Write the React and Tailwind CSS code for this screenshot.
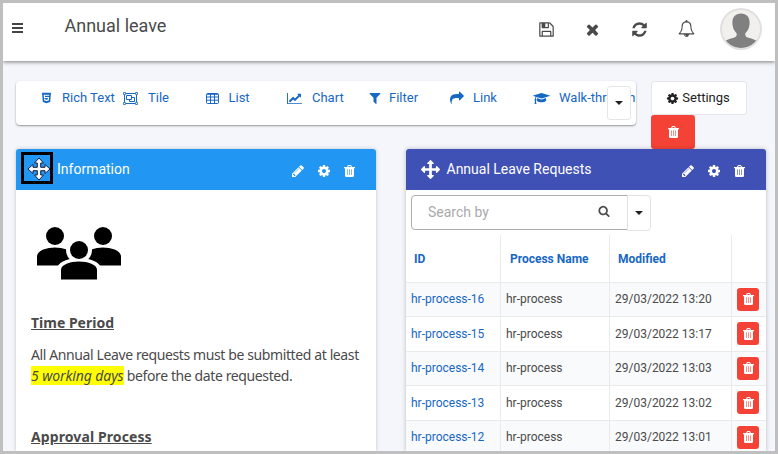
import React from "react";
import { FaHtml5 } from "react-icons/fa";

const PATHS = {
  refresh: "M1639 1056q0 5-1 7-64 268-268 434.5t-478 166.5q-146 0-282.5-55t-243.5-157l-129 129q-19 19-45 19t-45-19-19-45v-448q0-26 19-45t45-19h448q26 0 45 19t19 45-19 45l-137 137q71 66 161 102t187 36q134 0 250-65t186-179q11-17 53-117 8-23 30-23h192q13 0 22.5 9.5t9.5 22.5zm25-800v448q0 26-19 45t-45 19h-448q-26 0-45-19t-19-45 19-45l138-138q-148-137-349-137-134 0-250 65t-186 179q-11 17-53 117-8 23-30 23h-199q-13 0-22.5-9.5t-9.5-22.5v-7q65-268 270-434.5t480-166.5q146 0 284 55.5t245 156.5l130-129q19-19 45-19t45 19 19 45z",
  times: "M1490 1322q0 40-28 68l-136 136q-28 28-68 28t-68-28l-294-294-294 294q-28 28-68 28t-68-28l-136-136q-28-28-28-68t28-68l294-294-294-294q-28-28-28-68t28-68l136-136q28-28 68-28t68 28l294 294 294-294q28-28 68-28t68 28l136 136q28 28 28 68t-28 68l-294 294 294 294q28 28 28 68z",
  save: "M512 1536h768v-384h-768v384zm896 0h128v-896q0-14-10-38.5t-20-34.5l-281-281q-10-10-34-20t-39-10v416q0 40-28 68t-68 28h-576q-40 0-68-28t-28-68v-416h-128v1280h128v-416q0-40 28-68t68-28h832q40 0 68 28t28 68v416zm-384-928v-320q0-13-9.5-22.5t-22.5-9.5h-192q-13 0-22.5 9.5t-9.5 22.5v320q0 13 9.5 22.5t22.5 9.5h192q13 0 22.5-9.5t9.5-22.5zm640 32v928q0 40-28 68t-68 28h-1344q-40 0-68-28t-28-68v-1344q0-40 28-68t68-28h928q40 0 88 20t76 48l280 280q28 28 48 76t20 88z",
  bell: "M912 1696q0-16-16-16-59 0-101.5-42.5t-42.5-101.5q0-16-16-16t-16 16q0 73 51.5 124.5t124.5 51.5q16 0 16-16zm-666-288h1300q-266-300-266-832 0-51-24-105t-69-103-121.5-80.5-169.5-31.5-169.5 31.5-121.5 80.5-69 103-24 105q0 532-266 832zm1482 0q0 52-38 90t-90 38h-448q0 106-75 181t-181 75-181-75-75-181h-448q-52 0-90-38t-38-90q50-42 91-88t85-119.5 74.5-158.5 50-206 19.5-260q0-152 117-282.5t307-158.5q-8-19-8-39 0-40 28-68t68-28 68 28 28 68q0 20-8 39 190 28 307 158.5t117 282.5q0 139 19.5 260t50 206 74.5 158.5 85 119.5 91 88z",
  search: "M1216 832q0-185-131.5-316.5t-316.5-131.5-316.5 131.5-131.5 316.5 131.5 316.5 316.5 131.5 316.5-131.5 131.5-316.5zm512 832q0 52-38 90t-90 38q-54 0-90-38l-343-342q-179 124-399 124-143 0-273.5-55.5t-225-150-150-225-55.5-273.5 55.5-273.5 150-225 225-150 273.5-55.5 273.5 55.5 225 150 150 225 55.5 273.5q0 220-124 399l343 343q37 37 37 90z",
  arrows: "M1792 896q0 26-19 45l-256 256q-19 19-45 19t-45-19-19-45v-128h-384v384h128q26 0 45 19t19 45-19 45l-256 256q-19 19-45 19t-45-19l-256-256q-19-19-19-45t19-45 45-19h128v-384h-384v128q0 26-19 45t-45 19-45-19l-256-256q-19-19-19-45t19-45l256-256q19-19 45-19t45 19 19 45v128h384v-384h-128q-26 0-45-19t-19-45 19-45l256-256q19-19 45-19t45 19l256 256q19 19 19 45t-19 45-45 19h-128v384h384v-128q0-26 19-45t45-19 45 19l256 256q19 19 19 45z",
  cog: "M1152 896q0-106-75-181t-181-75-181 75-75 181 75 181 181 75 181-75 75-181zm512-109v222q0 12-8 23t-20 13l-185 28q-19 54-39 91 35 50 107 138 10 12 10 25t-9 23q-27 37-99 108t-94 71q-12 0-26-9l-138-108q-44 23-91 38-16 136-29 186-7 28-36 28h-222q-14 0-24.5-8.5t-11.5-21.5l-28-184q-49-16-90-37l-141 107q-10 9-25 9-14 0-25-11-126-114-165-168-7-10-7-23 0-12 8-23 15-21 51-66.5t54-70.5q-27-50-41-99l-183-27q-13-2-21-12.5t-8-23.5v-222q0-12 8-23t19-13l186-28q14-46 39-92-40-57-107-138-10-12-10-24 0-10 9-23 26-36 98.5-107.5t94.5-71.5q13 0 26 10l138 107q44-23 91-38 16-136 29-186 7-28 36-28h222q14 0 24.5 8.5t11.5 21.5l28 184q49 16 90 37l142-107q9-9 24-9 13 0 25 10 129 119 165 170 7 8 7 22 0 12-8 23-15 21-51 66.5t-54 70.5q26 50 41 98l183 28q13 2 21 12.5t8 23.5z",
  pencil: "M491 1536l91-91-235-235-91 91v107h128v128h107zm523-928q0-22-22-22-10 0-17 7l-542 542q-7 7-7 17 0 22 22 22 10 0 17-7l542-542q7-7 7-17zm-54-192l416 416-832 832h-416v-416zm683 96q0 53-37 90l-166 166-416-416 166-165q36-38 90-38 53 0 91 38l235 234q37 39 37 91z",
  chart: "M2048 1536v128h-2048v-1536h128v1408h1920zm-128-1248v435q0 21-19.5 29.5t-35.5-7.5l-121-121-633 633q-10 10-23 10t-23-10l-233-233-416 416-192-192 585-585q10-10 23-10t23 10l233 233 464-464-121-121q-16-16-7.5-35.5t29.5-19.5h435q14 0 23 9t9 23z",
  share: "M1792 640q0 26-19 45l-512 512q-19 19-45 19t-45-19-19-45v-256h-224q-98 0-175.5 6t-154 21.5-133 42.5-105.5 69.5-80 101-48.5 138.5-17.5 181q0 55 5 123 0 6 2.5 23.5t2.5 26.5q0 15-8.5 25t-23.5 10q-16 0-28-17-7-9-13-22t-13.5-30-10.5-24q-127-285-127-451 0-199 53-333 162-403 875-403h224v-256q0-26 19-45t45-19 45 19l512 512q19 19 19 45z",
  filter: "M1595 295q17 41-14 70l-493 493v742q0 42-39 59-13 5-25 5-27 0-45-19l-256-256q-19-19-19-45v-486l-493-493q-31-29-14-70 17-39 59-39h1280q42 0 59 39z",
  grad: "M1774 836l18 316q4 69-82 128t-235 93.5-323 34.5-323-34.5-235-93.5-82-128l18-316 574 181q22 7 48 7t48-7zm530-324q0 23-22 31l-1120 352q-4 1-10 1t-10-1l-652-206q-43 34-71 111.5t-34 178.5q63 36 63 109 0 69-58 107l58 433q2 14-8 25-9 11-24 11h-192q-15 0-24-11-10-11-8-25l58-433q-58-38-58-107 0-73 65-111 11-207 98-330l-333-104q-22-8-22-31t22-31l1120-352q4-1 10-1t10 1l1120 352q22 8 22 31z",
};

const VIEW = { chart: "0 0 2048 1792", grad: "0 0 2304 1792" };

function Icon({ name, className }) {
  return (
    <svg viewBox={VIEW[name] || "0 0 1792 1792"} fill="currentColor" className={`shrink-0 ${className}`}>
      <path d={PATHS[name]} />
    </svg>
  );
}

function TrashIcon() {
  return (
    <svg viewBox="0 0 11 12" fill="currentColor" className="h-[12px] w-[11px] shrink-0">
      <path fillRule="evenodd" d="M3 2l.6-1.300Q3.900 0 4.700 0h1.600q.8 0 1.100.7L8 2h3v1.200h-1V10.500q0 1.500-1.300 1.500H2.300Q1 12 1 10.500V3.200H0V2zM4.200 2h2.600l-.4-.9H4.600zM3 4.500v5.500h1V4.500zM5 4.500v5.500h1V4.500zM7 4.500v5.500h1V4.500z" />
      <path d="M3 4.500h5v5.500H3z" opacity=".4" />
    </svg>
  );
}

function TileIcon() {
  return (
    <svg viewBox="0 0 15 13" fill="none" stroke="currentColor" className="h-[13px] w-[15px] shrink-0">
      <path d="M3 1.500h9M3 11.500h9M1.500 3v7M13.500 3v7" />
      <path d="M.5.5h2v2h-2zM12.500.5h2v2h-2zM.5 10.500h2v2h-2zM12.500 10.500h2v2h-2z" strokeWidth=".8" />
      <path d="M3.500 3.500h5v4h-5zM8.500 5.500h3v4h-5v-2" />
    </svg>
  );
}

function TableIcon() {
  return (
    <svg viewBox="0 0 13 11" fill="none" stroke="currentColor" className="h-[11px] w-[13px] shrink-0">
      <rect x=".5" y=".5" width="12" height="10" rx="1" />
      <path d="M1 1.300h11M1 4h11M1 7.200h11M4.500 1v9.500M8.500 1v9.500" />
    </svg>
  );
}

function MoveCursor() {
  return (
    <svg viewBox="0 0 24 24" className="ml-[3px] mt-[2px] h-6 w-6 shrink-0" strokeLinejoin="round">
      <path
        d="M12 1l4.500 5H13.700v4.300H18V7.500L23 12l-5 4.500v-2.800h-4.300V18h2.800L12 23l-4.500-5h2.800v-4.300H6v2.800L1 12l5-4.500v2.800h4.300V6H7.500z"
        fill="#fff" stroke="#1c1c3c" strokeWidth="1"
      />
    </svg>
  );
}

function Caret() {
  return <span className="h-0 w-0 border-x-[4px] border-t-[4px] border-x-transparent border-t-[#222]" />;
}

function Avatar() {
  return (
    <svg viewBox="0 0 42 42" className="h-[42px] w-[42px] shrink-0">
      <defs>
        <clipPath id="avatar"><circle cx="21" cy="21" r="19" /></clipPath>
      </defs>
      <circle cx="21" cy="21" r="21" fill="#e0e0e0" />
      <circle cx="21" cy="21" r="19" fill="#f1f0ec" />
      <g clipPath="url(#avatar)" fill="#808080">
        <path d="M21 5.500c5.600 0 8.600 3.600 8.600 9 0 5.300-2 8.500-4.200 10.700-.5 2.600.3 3.600 3 4.500 3.600 1.200 7.600 2 10.600 4.800V42H3v-7.500c3-2.800 7-3.600 10.600-4.800 2.700-.9 3.500-1.900 3-4.500-2.200-2.200-4.200-5.400-4.200-10.700 0-5.400 3-9 8.600-9z" />
      </g>
    </svg>
  );
}

function GroupIcon() {
  return (
    <svg viewBox="0 0 84 53" className="h-[53px] w-[84px]">
      <circle cx="18" cy="9" r="9" />
      <circle cx="66" cy="9" r="9" />
      <path d="M0 38.500V29.500c0-6 10-9 18-9s18 3 18 9v9zM48 38.500V29.500c0-6 10-9 18-9s18 3 18 9v9z" />
      <circle cx="42" cy="23" r="13" fill="#fff" />
      <path d="M20 53V40c3-6 13-9 22-9s19 3 22 9v13z" fill="#fff" />
      <circle cx="42" cy="23" r="9" />
      <path d="M24 52.500V43c0-5.500 9-8.500 18-8.500s18 3 18 8.500v9.500z" />
    </svg>
  );
}

const tools = [
  { label: "Rich Text", icon: <FaHtml5 className="h-[12px] w-[11px]" />, item: "w-[82px]", slot: "w-[21px]" },
  { label: "Tile", icon: <TileIcon />, item: "w-[83px]", slot: "w-[25px]" },
  { label: "List", icon: <TableIcon />, item: "w-[81px]", slot: "w-[22.5px]" },
  { label: "Chart", icon: <Icon name="chart" className="h-[13px] w-[15px]" />, item: "w-[81px]", slot: "w-[25px]" },
  { label: "Filter", icon: <Icon name="filter" className="h-[14px] w-[14px]" />, item: "w-[82px]", slot: "w-[21px]" },
  { label: "Link", icon: <Icon name="share" className="h-[14px] w-[14px]" />, item: "w-[83px]", slot: "w-[23px]" },
  { label: "Walk-through", icon: <Icon name="grad" className="h-[13px] w-[17px]" />, item: "w-[103px]", slot: "w-[26px]" },
];

const rows = [
  ["hr-process-16", "29/03/2022 13:20"],
  ["hr-process-15", "29/03/2022 13:17"],
  ["hr-process-14", "29/03/2022 13:03"],
  ["hr-process-13", "29/03/2022 13:02"],
  ["hr-process-12", "29/03/2022 13:01"],
];

function PanelActions() {
  return (
    <div className="mr-[21px] mt-[2px] flex items-center">
      <Icon name="pencil" className="mr-[12px] h-[14px] w-[14px]" />
      <Icon name="cog" className="mr-[13px] h-[14px] w-[14px]" />
      <TrashIcon />
    </div>
  );
}

export default function App() {
  return (
    <div className="flex h-[454px] w-[778px] flex-col overflow-hidden border-[3px] border-[#bfbfbf] bg-[#f4f6fb] font-['Roboto',sans-serif] text-[#4a4a4a]">
      <header className="relative z-10 flex h-[58px] shrink-0 items-start bg-white shadow-[0_1px_4px_rgba(0,0,0,0.5)]">
        <div className="ml-[9px] mt-[20px] flex w-[11px] flex-col gap-[2px]">
          <span className="h-[2px] bg-[#444]" />
          <span className="h-[2px] bg-[#444]" />
          <span className="h-[2px] bg-[#444]" />
        </div>
        <h1 className="ml-[41.5px] mt-[10px] grow text-[18px] leading-[26px]">Annual leave</h1>
        <div className="mr-[13px] mt-[5px] flex items-center">
          <Icon name="save" className="mr-[29px] h-[17px] w-[17px]" />
          <Icon name="times" className="mr-[30px] h-[17px] w-[17px]" />
          <Icon name="refresh" className="mr-[30px] h-[17px] w-[17px]" />
          <Icon name="bell" className="mb-[2px] mr-[25px] h-[17px] w-[17px]" />
          <Avatar />
        </div>
      </header>

      <div className="ml-[13px] mt-[20px] flex h-[68px] shrink-0 items-start">
        <div className="relative flex h-[44px] w-[620px] rounded-[4px] bg-white pl-[25px] text-[13px] leading-[18px] text-[#1767c4] shadow-[0_1px_2px_rgba(0,0,0,0.4)]">
          {tools.map((t) => (
            <div key={t.label} className={`mt-[8px] flex h-[18px] shrink-0 items-center whitespace-nowrap ${t.item}`}>
              <span className={`flex shrink-0 ${t.slot}`}>{t.icon}</span>
              {t.label}
            </div>
          ))}
          <button className="absolute left-[591px] top-[5px] flex h-[34px] w-[24px] items-center justify-center rounded-[3px] border border-[#e4e6e8] bg-white">
            <Caret />
          </button>
        </div>
        <div className="ml-[15px] flex flex-col items-start">
          <button className="flex h-[34px] w-[96px] items-center justify-center gap-[3px] rounded-[3px] border border-[#e4e6ea] bg-white pr-[2px] text-[13px] text-[#222]">
            <Icon name="cog" className="h-[13px] w-[13px]" />
            Settings
          </button>
          <button className="flex h-[34px] w-[44px] items-center justify-center rounded-[3px] bg-[#f44336] text-white">
            <TrashIcon />
          </button>
        </div>
      </div>

      <main className="ml-[13px] flex min-h-0 grow gap-[30px]">
        <section className="w-[360px] rounded-t-[3px] bg-white shadow-[0_0_4px_rgba(0,0,0,0.2)]">
          <div className="flex h-[41px] items-center rounded-t-[3px] bg-[#2196f3] text-white">
            <div className="ml-[5px] mt-[-3px] flex h-[32px] w-[32px] items-center justify-center border-[3px] border-black">
              <MoveCursor />
            </div>
            <h2 className="ml-[4px] grow text-[14px]">Information</h2>
            <PanelActions />
          </div>
          <div className="pl-[15px] pt-[37px] font-['Noto_Sans',sans-serif] text-[14px] leading-[21px]">
            <div className="ml-[6px]"><GroupIcon /></div>
            <h3 className="mt-[32px] font-bold underline">Time Period</h3>
            <p className="mt-[11px] whitespace-nowrap tracking-[-0.39px]">
              All Annual Leave requests must be submitted at least
              <br />
              <em className="bg-[#ffff00] leading-[17px] tracking-[-0.1px]">5 working days</em> before the date requested.
            </p>
            <h3 className="mt-[40px] font-bold tracking-[0.1px] underline">Approval Process</h3>
          </div>
        </section>

        <section className="w-[360px] rounded-t-[3px] bg-white shadow-[0_0_4px_rgba(0,0,0,0.25)]">
          <div className="flex h-[41px] items-center rounded-t-[3px] bg-[#3f51b5] text-white">
            <Icon name="arrows" className="ml-[15px] h-[19px] w-[19px]" />
            <h2 className="ml-[6.5px] grow text-[14px]">Annual Leave Requests</h2>
            <PanelActions />
          </div>
          <div className="ml-[5px] mt-[5px] flex h-[35px]">
            <div className="flex w-[217px] items-center rounded-l-[4px] border border-[#adadad] pl-[16px] pr-[17px]">
              <span className="grow text-[14px] text-[#aaa]">Search by</span>
              <Icon name="search" className="mb-[3px] h-[12px] w-[12px]" />
            </div>
            <button className="-ml-px flex h-[36px] w-[24px] items-center justify-center rounded-r-[4px] border border-[#dfe3e6] bg-white">
              <Caret />
            </button>
          </div>
          <table className="mt-[5px] w-[360px] table-fixed border-separate border-spacing-0 text-[12px] leading-[16px]">
            <colgroup>
              <col className="w-[95px]" />
              <col className="w-[109px]" />
              <col className="w-[122px]" />
              <col className="w-[34px]" />
            </colgroup>
            <thead>
              <tr className="h-[47.5px] text-left text-[#1767c4]">
                <th className="border-b border-r border-[#e8eaec] pl-[8px] pt-[2px] font-bold">ID</th>
                <th className="border-b border-r border-[#e8eaec] pl-[9px] pt-[2px] font-bold">Process Name</th>
                <th className="border-b border-r border-[#e8eaec] pl-[8px] pt-[2px] font-bold">Modified</th>
                <th className="border-b border-[#e8eaec]" />
              </tr>
            </thead>
            <tbody>
              {rows.map(([id, date]) => (
                <tr key={id} className="h-[34.5px] odd:bg-[#f9fafb]">
                  <td className="border-b border-r border-[#e8eaec] pl-[5px] text-[#1767c4]">{id}</td>
                  <td className="border-b border-r border-[#e8eaec] pl-[5px]">hr-process</td>
                  <td className="border-b border-r border-[#e8eaec] pl-[5px]">{date}</td>
                  <td className="border-b border-[#e8eaec] pl-[5px]">
                    <span className="flex h-[23px] w-[22px] items-center justify-center rounded-[3px] bg-[#f44336] text-white">
                      <TrashIcon />
                    </span>
                  </td>
                </tr>
              ))}
            </tbody>
          </table>
        </section>
      </main>
    </div>
  );
}
